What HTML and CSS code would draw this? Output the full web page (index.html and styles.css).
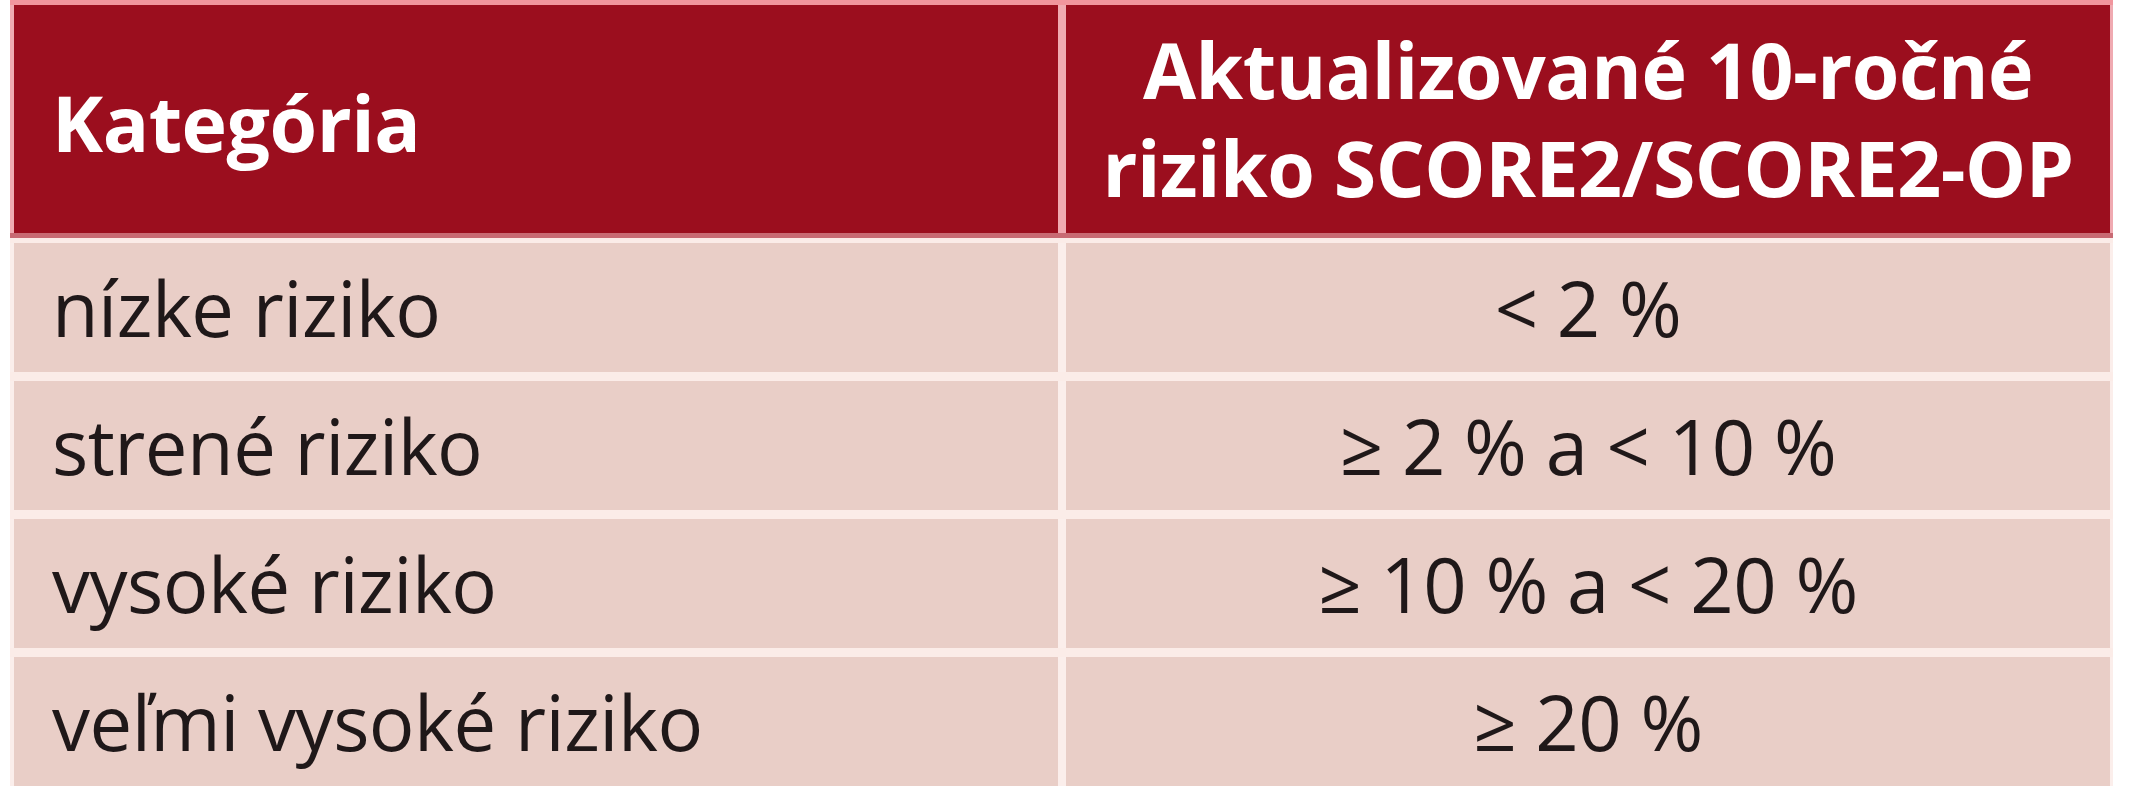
FILE: index.html
```html
<!DOCTYPE html>
<html lang="sk">
<head>
<meta charset="utf-8">
<title>SCORE2</title>
<link rel="stylesheet" href="styles.css">
</head>
<body>
<div class="page">
  <div class="table">
    <div class="row head">
      <div class="cell left">Kategória</div>
      <div class="cell center">Aktualizované 10-ročné<br>riziko SCORE2/SCORE2-OP</div>
    </div>
    <div class="row body">
      <div class="cell left">nízke riziko</div>
      <div class="cell center">&lt; 2 %</div>
    </div>
    <div class="row body">
      <div class="cell left">strené riziko</div>
      <div class="cell center">≥ 2 % a &lt; 10 %</div>
    </div>
    <div class="row body">
      <div class="cell left">vysoké riziko</div>
      <div class="cell center">≥ 10 % a &lt; 20 %</div>
    </div>
    <div class="row body">
      <div class="cell left">veľmi vysoké riziko</div>
      <div class="cell center">≥ 20 %</div>
    </div>
  </div>
</div>
</body>
</html>
```

FILE: styles.css
```css
html, body {
  margin: 0;
  padding: 0;
  background: #ffffff;
}

.page {
  padding-left: 10px;
  width: 2129px;
  height: 800px;
  box-sizing: border-box;
}

.table {
  width: 2103px;
  display: flex;
  flex-direction: column;
  background: #fbece8;
  border-top: 5px solid #f1959d;
  font-family: "Open Sans", "Noto Sans", sans-serif;
}

.row {
  display: grid;
  grid-template-columns: 1fr 1fr;
  column-gap: 8px;
  padding: 0 3px 0 4px;
}

.head {
  height: 233px;
  box-sizing: border-box;
  border-bottom: 5px solid #c86a73;
  background: #f0aab1;
  padding: 0 3px 0 4px;
}

.head .cell {
  background: #9b0e1e;
  color: #ffffff;
  font-weight: 700;
  font-size: 77px;
  letter-spacing: -0.5px;
}

.head .left {
  padding-top: 6px;
}

.head .center {
  line-height: 98px;
}

.body {
  height: 129px;
  margin-top: 9px;
  background: #fbeeeb;
}

.head + .body {
  margin-top: 5px;
}

.body .cell {
  background: #e9cec7;
  color: #1f1819;
  font-size: 76px;
  letter-spacing: -0.5px;
}

.cell {
  display: flex;
  align-items: center;
  white-space: nowrap;
}

.left {
  padding-left: 38px;
  justify-content: flex-start;
}

.center {
  justify-content: center;
  text-align: center;
}
```
